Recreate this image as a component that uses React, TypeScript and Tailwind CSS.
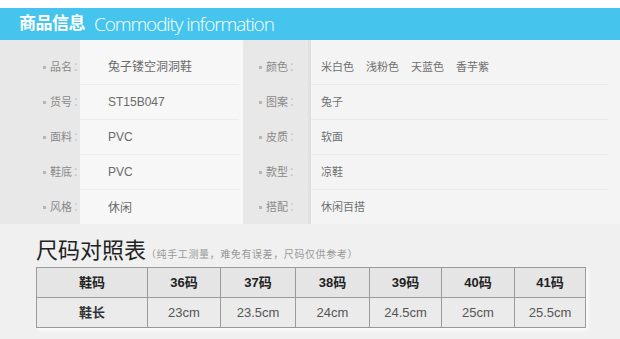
import React from 'react';

const leftRows = [
  { label: '品名', value: '兔子镂空洞洞鞋' },
  { label: '货号', value: 'ST15B047' },
  { label: '面料', value: 'PVC' },
  { label: '鞋底', value: 'PVC' },
  { label: '风格', value: '休闲' },
];

const rightRows = [
  { label: '颜色', value: ['米白色', '浅粉色', '天蓝色', '香芋紫'] },
  { label: '图案', value: ['兔子'] },
  { label: '皮质', value: ['软面'] },
  { label: '款型', value: ['凉鞋'] },
  { label: '搭配', value: ['休闲百搭'] },
];

const sizes = ['36码', '37码', '38码', '39码', '40码', '41码'];
const lengths = ['23cm', '23.5cm', '24cm', '24.5cm', '25cm', '25.5cm'];
const colWidths = ['w-[111px]', 'w-[73px]', 'w-[75px]', 'w-[74px]', 'w-[72px]', 'w-[73px]', 'w-[71px]'];

const font = "font-['Liberation_Sans','Noto_Sans_CJK_SC',sans-serif]";

function Label({ text }: { text: string }) {
  return (
    <div className="h-[35px] flex items-center whitespace-nowrap text-[11px] text-[#8a8a8a]">
      <span className="shrink-0 w-[3px] h-[3px] bg-[#b5b5b5] mr-[4px]" />
      <span>{text}</span>
      <span className="text-[#c4c4c4] ml-[1px]">：</span>
    </div>
  );
}

export default function App() {
  return (
    <div className={`w-[620px] h-[339px] overflow-hidden bg-[#f0f0f0] ${font}`}>
      <div className="h-[8px] bg-white" />
      <div className="h-[32px] bg-[#45c5ed] flex items-center pl-[19px] text-white">
        <span className="text-[17px] font-bold tracking-[-0.5px]">商品信息</span>
        <span className="ml-[9px] text-[19px] font-light tracking-[-1.1px] font-['Open_Sans',sans-serif]">
          Commodity information
        </span>
      </div>

      <div className="flex h-[184px]">
        <div className="w-[80px] shrink-0 bg-[#e8e8e8] pt-[10px] pl-[43px]">
          {leftRows.map((r) => (
            <Label key={r.label} text={r.label} />
          ))}
        </div>
        <div className="w-[163px] shrink-0 bg-[#f7f7f7] pt-[10px]">
          {leftRows.map((r, i) => (
            <div
              key={r.label}
              className={`h-[35px] flex items-center pl-[28px] mr-[4px] text-[12px] text-[#6a6a6a] ${
                i < 4 ? 'border-b border-[#ececec]' : ''
              }`}
            >
              {r.value}
            </div>
          ))}
        </div>
        <div className="w-[68px] shrink-0 bg-[#e8e8e8] pt-[10px] pl-[16px] border-r-[3px] border-[#e0e0e0]">
          {rightRows.map((r) => (
            <Label key={r.label} text={r.label} />
          ))}
        </div>
        <div className="flex-1 bg-[#f4f4f4] pt-[10px]">
          {rightRows.map((r, i) => (
            <div
              key={r.label}
              className={`h-[35px] flex items-center gap-[12px] pl-[10px] mr-[12px] text-[11px] text-[#707070] ${
                i < 4 ? 'border-b border-[#e9e9e9]' : ''
              }`}
            >
              {r.value.map((v) => (
                <span key={v}>{v}</span>
              ))}
            </div>
          ))}
        </div>
      </div>

      <div className="pl-[36px] pt-[12px]">
        <div className="flex items-end h-[27px]">
          <span className="text-[22px] leading-[24px] text-[#222]">尺码对照表</span>
          <span className="mb-[1px] text-[10px] tracking-[0.6px] text-[#999]">
            （纯手工测量，难免有误差，尺码仅供参考）
          </span>
        </div>
        <table className="mt-[4px] border-collapse table-fixed w-[549px] shadow-[2px_2px_4px_rgba(255,255,255,0.9)]">
          <colgroup>
            {colWidths.map((w, i) => (
              <col key={i} className={w} />
            ))}
          </colgroup>
          <tbody>
            <tr className="h-[30px] bg-[#e5e5e5]">
              <td className="border border-[#9a9a9a] text-center text-[13px] font-bold text-[#222]">鞋码</td>
              {sizes.map((s) => (
                <td key={s} className="border border-[#9a9a9a] text-center text-[13px] font-bold text-[#222]">
                  {s}
                </td>
              ))}
            </tr>
            <tr className="h-[30px] bg-[#ebebeb]">
              <td className="border border-[#9a9a9a] text-center text-[13px] font-bold text-[#333]">鞋长</td>
              {lengths.map((l) => (
                <td key={l} className="border border-[#9a9a9a] text-center text-[13px] text-[#555]">
                  {l}
                </td>
              ))}
            </tr>
          </tbody>
        </table>
      </div>
    </div>
  );
}
